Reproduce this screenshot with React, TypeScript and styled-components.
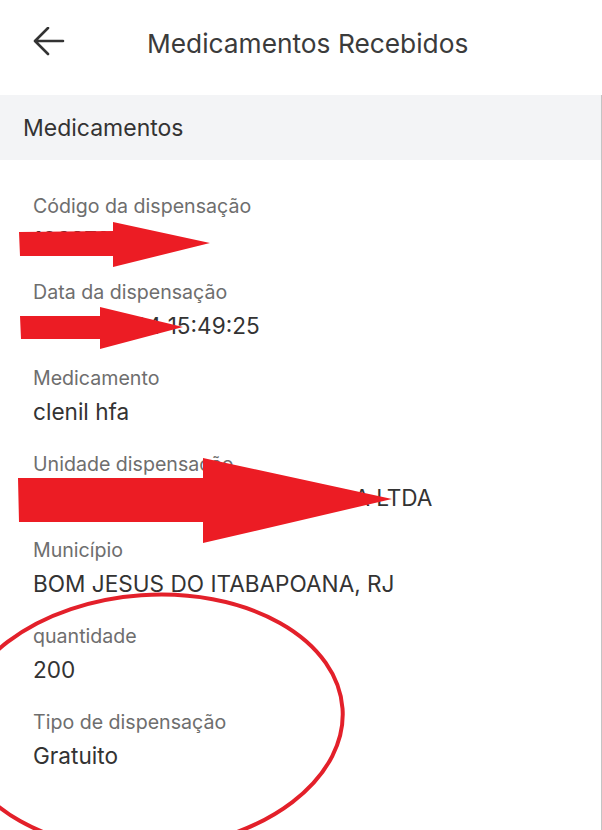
import React from 'react';
import styled, { createGlobalStyle } from 'styled-components';

const GlobalStyle = createGlobalStyle`
  html, body {
    margin: 0;
    padding: 0;
    background: #ffffff;
  }
  body {
    font-family: Inter, "Noto Sans", "Liberation Sans", sans-serif;
  }
`;

const Screen = styled.div`
  position: relative;
  width: 602px;
  height: 830px;
  overflow: hidden;
  background: #ffffff;
`;

const Header = styled.header`
  display: flex;
  align-items: center;
  height: 86px;
  padding: 0 0 9px 33px;
`;

const BackButton = styled.button`
  display: flex;
  align-items: center;
  justify-content: center;
  width: 32px;
  height: 32px;
  padding: 0;
  border: none;
  background: transparent;
  cursor: pointer;
`;

const Title = styled.h1`
  margin: 0 0 0 82px;
  font-size: 26.3px;
  font-weight: 400;
  color: #3b3b3b;
`;

const Body = styled.div`
  border-right: 1px solid #c4c4c4;
  height: 735px;
`;

const SectionBar = styled.div`
  display: flex;
  align-items: center;
  height: 65px;
  padding-left: 23px;
  background: #f3f4f6;
  font-size: 23px;
  color: #333333;
`;

const FieldList = styled.dl`
  display: flex;
  flex-direction: column;
  gap: 28px;
  margin: 0;
  padding: 35px 0 0 33px;
`;

const Field = styled.div`
  display: flex;
  flex-direction: column;
`;

const Label = styled.dt`
  font-size: 19.6px;
  line-height: 22px;
  color: #6e6e6e;
`;

const Value = styled.dd`
  margin: 10px 0 0;
  font-size: 22.6px;
  line-height: 26px;
  color: #333333;
`;

const Annotations = styled.svg`
  position: absolute;
  inset: 0;
  pointer-events: none;
`;

const fields = [
  { label: 'Código da dispensação', value: '1062793' },
  { label: 'Data da dispensação', value: '28/08/2024 15:49:25' },
  { label: 'Medicamento', value: 'clenil hfa' },
  { label: 'Unidade dispensação', value: 'DROGARIA E FARMÁCIA PAULA LTDA' },
  { label: 'Município', value: 'BOM JESUS DO ITABAPOANA, RJ' },
  { label: 'quantidade', value: '200' },
  { label: 'Tipo de dispensação', value: 'Gratuito' },
];

const RED = '#ec1c24';

export default function App() {
  return (
    <Screen>
      <GlobalStyle />
      <Header>
        <BackButton aria-label="Voltar">
          <svg width="32" height="32" viewBox="0 0 32 32" fill="none">
            <path
              d="M30 14H3M15 1L2 14l13 13"
              stroke="#333"
              strokeWidth="2.6"
              strokeLinecap="round"
              strokeLinejoin="round"
            />
          </svg>
        </BackButton>
        <Title>Medicamentos Recebidos</Title>
      </Header>
      <Body>
        <SectionBar>Medicamentos</SectionBar>
        <FieldList>
          {fields.map(f => (
            <Field key={f.label}>
              <Label>{f.label}</Label>
              <Value>{f.value}</Value>
            </Field>
          ))}
        </FieldList>
      </Body>

      <Annotations width="602" height="830" viewBox="0 0 602 830">
        <path
          d="M19 232 L113 231 L113 222 L210 243 L113 267 L113 256 L20 256 Z"
          fill={RED}
        />
        <path
          d="M20 316 L100 316 L100 307 L183 327 L100 349 L100 339 L21 339 Z"
          fill={RED}
        />
        <path
          d="M18 478 L203 478 L203 458 L392 499 L203 543 L203 522 L19 522 Z"
          fill={RED}
        />
        <ellipse
          cx="150"
          cy="722"
          rx="193"
          ry="127"
          transform="rotate(-4 150 722)"
          fill="none"
          stroke="#e3202a"
          strokeWidth="4"
        />
      </Annotations>
    </Screen>
  );
}
